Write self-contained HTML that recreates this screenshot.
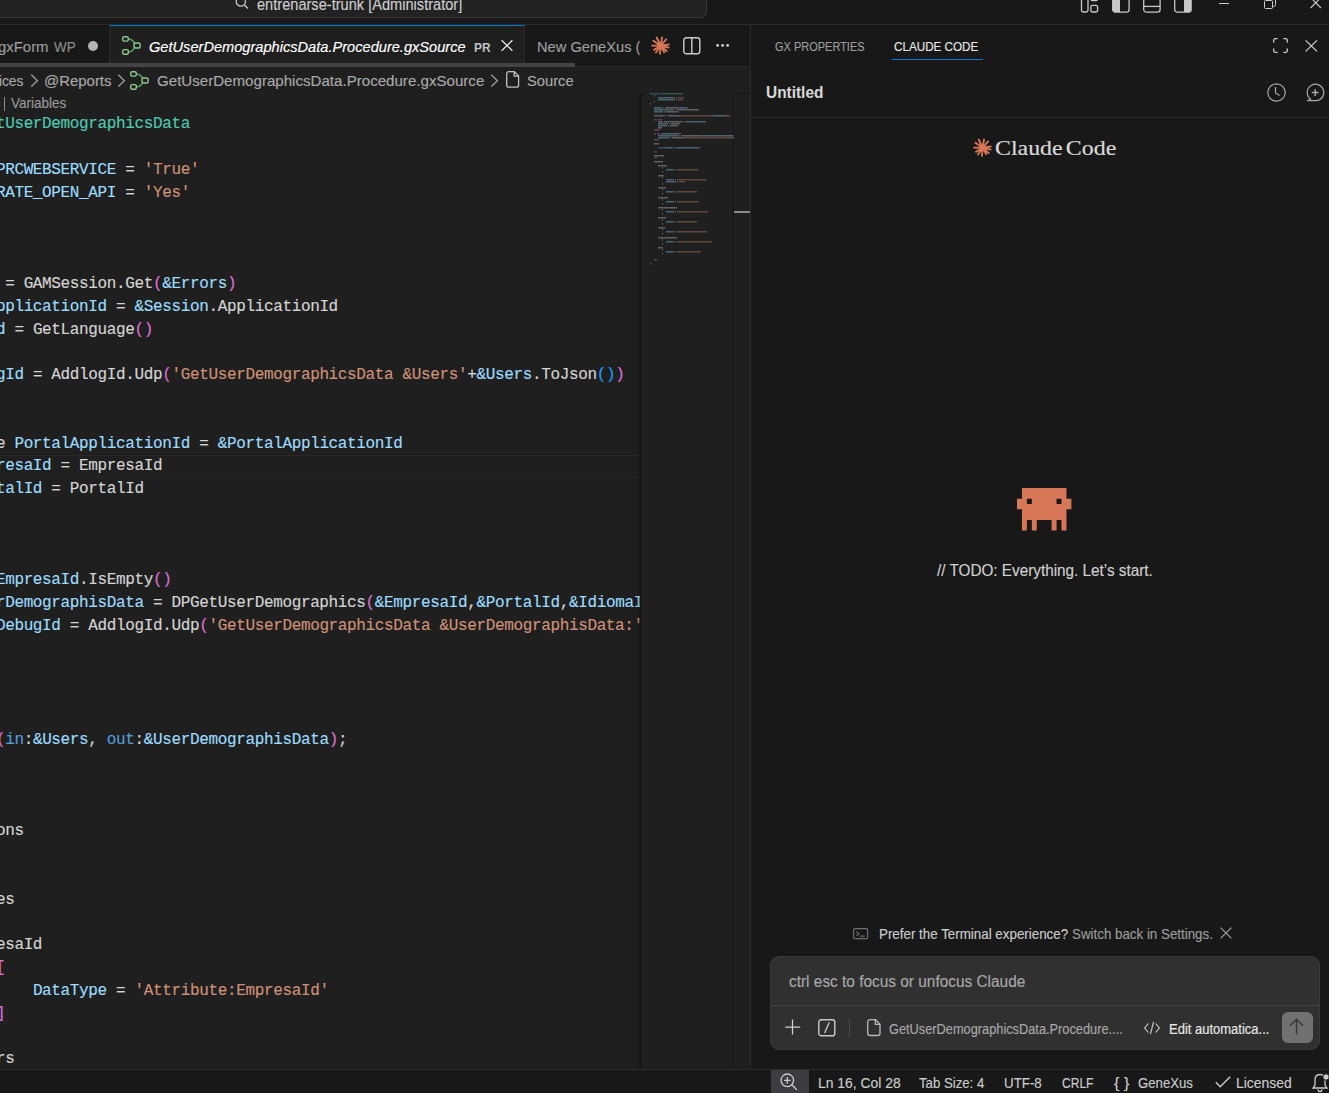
<!DOCTYPE html>
<html><head><meta charset="utf-8">
<style>
*{box-sizing:border-box;margin:0;padding:0}
html,body{width:1329px;height:1093px;overflow:hidden;background:#181818;font-family:"Liberation Sans",sans-serif;color:#ccc}
.a{position:absolute;white-space:pre;-webkit-text-stroke:0.15px currentColor}
svg{position:absolute;overflow:visible}
/* title bar */
#title{position:absolute;left:0;top:0;width:1329px;height:24px;background:#181818}
#search{position:absolute;left:-400px;top:-20px;width:1106.5px;height:38px;background:#222222;border:1px solid #383838;border-radius:6px}
#tline{position:absolute;left:0;top:24px;width:1329px;height:1px;background:#2b2b2b}
/* tabs */
#tabs{position:absolute;left:0;top:25px;width:750px;height:42px;background:#181818;overflow:hidden}
.tab{position:absolute;top:0;height:42px}
/* editor */
#bc{position:absolute;left:0;top:67px;width:750px;height:26px;background:#1f1f1f}
#ed{position:absolute;left:0;top:93px;width:750px;height:976px;background:#1f1f1f;overflow:hidden}
.code{position:absolute;left:-4.1px;font-family:"Liberation Mono",monospace;font-size:16px;letter-spacing:-0.36px;-webkit-text-stroke:0.15px currentColor;white-space:pre;color:#d4d4d4;height:22.8px;line-height:22.8px}
.v{color:#9cdcfe}.s{color:#ce9178}.t{color:#4ec9b0}.p{color:#da70d6}.b{color:#179fff}.k{color:#569cd6}
/* panel */
#panel{position:absolute;left:750px;top:25px;width:579px;height:1044px;background:#181818}
#status{position:absolute;left:0;top:1069px;width:1329px;height:24px;background:#181818;border-top:1px solid #2b2b2b}
</style></head><body>
<div id="title">
  <div id="search"></div>
  <svg style="left:235px;top:-4px" width="14" height="14" viewBox="0 0 14 14"><circle cx="5.8" cy="5.5" r="4.6" fill="none" stroke="#c4c4c4" stroke-width="1.3"/><line x1="9.1" y1="8.8" x2="13" y2="12.6" stroke="#c4c4c4" stroke-width="1.4"/></svg>
  <div class="a" id="ttext" style="left:257.00px;top:-4.00px;font-size:15.6px;line-height:18px;color:#cccccc;transform:scaleX(0.9361);transform-origin:0 0">entrenarse-trunk [Administrator]</div>
  <svg style="left:1080px;top:-8px" width="20" height="21" viewBox="0 0 20 21"><rect x="1.5" y="0.7" width="6.5" height="19.3" rx="1.8" fill="none" stroke="#c8c8c8" stroke-width="1.3"/><rect x="10.8" y="0.7" width="6.8" height="8" rx="1.8" fill="none" stroke="#c8c8c8" stroke-width="1.3"/><rect x="10.8" y="13.4" width="6.8" height="6.6" rx="1.8" fill="none" stroke="#c8c8c8" stroke-width="1.3"/></svg>
  <svg style="left:1112px;top:-8px" width="18" height="21" viewBox="0 0 18 21"><rect x="0.7" y="0.7" width="16.4" height="19.4" rx="2.6" fill="none" stroke="#c8c8c8" stroke-width="1.3"/><path d="M0.7 3.3 A2.6 2.6 0 0 1 3.3 0.7 H8 V20.1 H3.3 A2.6 2.6 0 0 1 0.7 17.5Z" fill="#c8c8c8"/></svg>
  <svg style="left:1143px;top:-8px" width="18" height="21" viewBox="0 0 18 21"><rect x="0.7" y="0.7" width="16.4" height="19.4" rx="2.6" fill="none" stroke="#c8c8c8" stroke-width="1.3"/><line x1="0.7" y1="14.4" x2="17.1" y2="14.4" stroke="#c8c8c8" stroke-width="1.3"/></svg>
  <svg style="left:1174px;top:-8px" width="18" height="21" viewBox="0 0 18 21"><rect x="0.7" y="0.7" width="16.4" height="19.4" rx="2.6" fill="none" stroke="#c8c8c8" stroke-width="1.3"/><path d="M17.1 3.3 A2.6 2.6 0 0 0 14.5 0.7 H10 V20.1 H14.5 A2.6 2.6 0 0 0 17.1 17.5Z" fill="#c8c8c8"/></svg>
  <div class="a" style="left:1219px;top:3px;width:10px;height:1px;background:#cccccc"></div>
  <svg style="left:1264px;top:-3px" width="12" height="12" viewBox="0 0 12 12"><rect x="0.5" y="3.5" width="8" height="8" rx="1" fill="none" stroke="#cccccc" stroke-width="1"/><path d="M2.5 3.5 V2.5 A2 2 0 0 1 4.5 0.5 H9.5 A2 2 0 0 1 11.5 2.5 V7.5 A2 2 0 0 1 9.5 9.5 H8.5" fill="none" stroke="#cccccc" stroke-width="1"/></svg>
  <svg style="left:1310px;top:-3px" width="12" height="12" viewBox="0 0 12 12"><path d="M0.5 0.5 L11 11 M11 0.5 L0.5 11" stroke="#cccccc" stroke-width="1.1"/></svg>
</div>
<div id="tline"></div>
<div id="tabs">
  <div class="tab" style="left:-40px;width:150px;background:#181818;border-right:1px solid #2b2b2b">
    <div class="a" id="t1" style="left:38.4px;top:12.60px;font-size:15.3px;line-height:18px;color:#9d9d9d;transform:scaleX(0.975);transform-origin:0 0">gxForm</div>
    <div class="a" id="t1b" style="left:93.93px;top:12.60px;font-size:15.3px;line-height:18px;color:#8b8b8b;transform:scaleX(0.8767);transform-origin:0 0">WP</div>
    <div class="a" style="left:127.5px;top:15.8px;width:10px;height:10px;border-radius:5px;background:#b4b4b4"></div>
  </div>
  <div class="tab" style="left:110px;width:415px;background:#1f1f1f;border-top:1px solid #0078d4;border-right:1px solid #2b2b2b">
    <svg style="left:12px;top:10.2px" width="20" height="20" viewBox="0 0 20 20"><path d="M6.6 3 C9.6 3.2 11.2 4.8 12.6 7.2 M6.6 16 C9.6 15.8 11.2 14.3 12.6 11.9" fill="none" stroke="#62a862" stroke-width="1.4"/><path d="M12.9 5.6 L13.3 7.6 L11.4 7.3Z M6.4 14.6 L7.6 16.8 L5.8 16.2Z" fill="#62a862"/><rect x="0.7" y="0.7" width="5.6" height="4.4" rx="1.5" fill="none" stroke="#8fcb8f" stroke-width="1.4"/><rect x="0.7" y="13.6" width="5.6" height="4.6" rx="1.5" fill="none" stroke="#8fcb8f" stroke-width="1.4"/><rect x="12.05" y="7" width="6.1" height="5" rx="1.5" fill="none" stroke="#8fcb8f" stroke-width="1.4"/></svg>
    <div class="a" id="t2" style="left:39.11px;top:11.60px;font-size:15.3px;line-height:18px;color:#ffffff;font-style:italic;transform:scaleX(0.9549);transform-origin:0 0">GetUserDemographicsData.Procedure.gxSource</div>
    <div class="a" id="t2b" style="left:364.04px;top:13.50px;font-size:13px;line-height:16px;color:#c2c2c2;font-weight:bold;-webkit-text-stroke:0;transform:scaleX(0.9160);transform-origin:0 0">PR</div>
    <svg style="left:391.3px;top:14.2px" width="12" height="11" viewBox="0 0 12 11"><path d="M0.6 0.3 L11.4 10.7 M11.4 0.3 L0.6 10.7" stroke="#e8e8e8" stroke-width="1.3"/></svg>
  </div>
  <div class="tab" style="left:525px;width:116px;overflow:hidden">
    <div class="a" id="t3" style="left:12.4px;top:12.60px;font-size:15.3px;line-height:18px;color:#9d9d9d;transform:scaleX(0.958);transform-origin:0 0">New GeneXus (</div>
  </div>
  <svg style="left:650.8px;top:10.6px" width="19.5" height="19.5" viewBox="-10 -10 20 20"><path d="M0 0L-4.23 -8.46M0 0L1.29 -8.46M0 0L5.52 -6.53M0 0L8.28 -1.29M0 0L8.19 1.93M0 0L6.07 5.43M0 0L3.59 6.72M0 0L-0.83 8.19M0 0L-4.88 6.99M0 0L-6.99 4.23M0 0L-8.83 -0.18M0 0L-7.54 -5.06" stroke="#d97757" stroke-width="1.9" stroke-linecap="round" fill="none"/><circle r="2.5" fill="#d97757"/></svg>
  <svg style="left:682.5px;top:11.6px" width="18" height="18" viewBox="0 0 18 18"><rect x="0.8" y="0.8" width="16" height="16" rx="2.6" fill="none" stroke="#cccccc" stroke-width="1.4"/><line x1="8.8" y1="0.8" x2="8.8" y2="16.8" stroke="#cccccc" stroke-width="1.4"/></svg>
  <svg style="left:715px;top:17px" width="16" height="6" viewBox="0 0 16 6"><circle cx="2.6" cy="3.4" r="1.45" fill="#cccccc"/><circle cx="7.6" cy="3.4" r="1.45" fill="#cccccc"/><circle cx="12.6" cy="3.4" r="1.45" fill="#cccccc"/></svg>
  <div class="a" style="left:0;top:41px;width:750px;height:1px;background:#242424"></div>
  <div class="a" style="left:0;top:38px;width:575px;height:4px;background:#444444"></div>
</div>
<div id="bc">
  <div class="a" id="b1" style="left:-8.5px;top:4.60px;font-size:15.3px;line-height:18px;color:#a9a9a9;transform:scaleX(0.9);transform-origin:0 0">vices</div>
  <svg style="left:30px;top:6px" width="10" height="16" viewBox="0 0 10 16"><path d="M1.3 1.8 L7.4 7.75 L1.3 13.5" fill="none" stroke="#9d9d9d" stroke-width="1.35"/></svg>
  <div class="a" id="b2" style="left:43.71px;top:4.60px;font-size:15.3px;line-height:18px;color:#a9a9a9;transform:scaleX(0.9769);transform-origin:0 0">@Reports</div>
  <svg style="left:117px;top:6px" width="10" height="16" viewBox="0 0 10 16"><path d="M1.3 1.8 L7.4 7.75 L1.3 13.5" fill="none" stroke="#9d9d9d" stroke-width="1.35"/></svg><svg style="left:130px;top:4.1px" width="20" height="20" viewBox="0 0 20 20"><path d="M6.6 3 C9.6 3.2 11.2 4.8 12.6 7.2 M6.6 16 C9.6 15.8 11.2 14.3 12.6 11.9" fill="none" stroke="#62a862" stroke-width="1.4"/><path d="M12.9 5.6 L13.3 7.6 L11.4 7.3Z M6.4 14.6 L7.6 16.8 L5.8 16.2Z" fill="#62a862"/><rect x="0.7" y="0.7" width="5.6" height="4.4" rx="1.5" fill="none" stroke="#8fcb8f" stroke-width="1.4"/><rect x="0.7" y="13.6" width="5.6" height="4.6" rx="1.5" fill="none" stroke="#8fcb8f" stroke-width="1.4"/><rect x="12.05" y="7" width="6.1" height="5" rx="1.5" fill="none" stroke="#8fcb8f" stroke-width="1.4"/></svg>
  <div class="a" id="b3" style="left:156.98px;top:4.60px;font-size:15.3px;line-height:18px;color:#a9a9a9;transform:scaleX(0.9870);transform-origin:0 0">GetUserDemographicsData.Procedure.gxSource</div>
  <svg style="left:489.5px;top:6px" width="10" height="16" viewBox="0 0 10 16"><path d="M1.3 1.8 L7.4 7.75 L1.3 13.5" fill="none" stroke="#9d9d9d" stroke-width="1.35"/></svg>
  <svg style="left:506.3px;top:4px" width="14" height="17" viewBox="0 0 14 17"><path d="M2.6 0.7 H8.4 L12.6 4.9 V14 A2.2 2.2 0 0 1 10.4 16.2 H2.9 A2.2 2.2 0 0 1 0.7 14 V2.9 A2.2 2.2 0 0 1 2.6 0.7Z M8.2 0.7 V5.1 H12.6" fill="none" stroke="#c0c0c0" stroke-width="1.3"/></svg>
  <div class="a" id="b4" style="left:526.65px;top:4.60px;font-size:15.3px;line-height:18px;color:#a9a9a9;transform:scaleX(0.9610);transform-origin:0 0">Source</div>
</div>
<div id="ed">
<div class="a" style="left:0;top:361.5px;width:640px;height:23px;border-top:1px solid #282828;border-bottom:1px solid #282828"></div>
<div class="a" style="left:3.6px;top:4px;width:1.3px;height:14px;background:#8c8c8c"></div>
<div class="a" id="cl" style="left:11.00px;top:2px;font-size:14px;line-height:16px;color:#999999;transform:scaleX(0.9654);transform-origin:0 0">Variables</div>
<div class="a" style="left:0;top:0;width:640px;height:976px;overflow:hidden">
<div class="code" style="top:20.3px"><span class="t">tUserDemographicsData</span></div>
<div class="code" style="top:65.9px"><span class="v">PRCWEBSERVICE</span> = <span class="s">'True'</span></div>
<div class="code" style="top:88.7px"><span class="v">RATE_OPEN_API</span> = <span class="s">'Yes'</span></div>
<div class="code" style="top:179.9px"> = GAMSession.Get<span class="p">(</span><span class="v">&amp;Errors</span><span class="p">)</span></div>
<div class="code" style="top:202.7px"><span class="v">pplicationId</span> = <span class="v">&amp;Session</span>.ApplicationId</div>
<div class="code" style="top:225.5px"><span class="v">d</span> = GetLanguage<span class="p">()</span></div>
<div class="code" style="top:271.1px"><span class="v">gId</span> = AddlogId.Udp<span class="p">(</span><span class="s">'GetUserDemographicsData &amp;Users'</span>+<span class="v">&amp;Users</span>.ToJson<span class="b">()</span><span class="p">)</span></div>
<div class="code" style="top:339.5px">e <span class="v">PortalApplicationId</span> = <span class="v">&amp;PortalApplicationId</span></div>
<div class="code" style="top:362.3px"><span class="v">resaId</span> = EmpresaId</div>
<div class="code" style="top:385.1px"><span class="v">talId</span> = PortalId</div>
<div class="code" style="top:476.3px"><span class="v">EmpresaId</span>.IsEmpty<span class="p">()</span></div>
<div class="code" style="top:499.1px"><span class="v">rDemographisData</span> = DPGetUserDemographics<span class="p">(</span><span class="v">&amp;EmpresaId</span>,<span class="v">&amp;PortalId</span>,<span class="v">&amp;IdiomaId</span><span class="p">)</span></div>
<div class="code" style="top:521.9px"><span class="v">DebugId</span> = AddlogId.Udp<span class="p">(</span><span class="s">'GetUserDemographicsData &amp;UserDemographisData:'</span>+<span class="v">&amp;UserDemographisData</span>.ToJson<span class="b">()</span><span class="p">)</span></div>
<div class="code" style="top:635.9px"><span class="p">(</span><span class="k">in</span>:<span class="v">&amp;Users</span>, <span class="k">out</span>:<span class="v">&amp;UserDemographisData</span><span class="p">)</span>;</div>
<div class="code" style="top:727.1px">ons</div>
<div class="code" style="top:795.5px">es</div>
<div class="code" style="top:841.1px">esaId</div>
<div class="code" style="top:863.9px"><span class="p">[</span></div>
<div class="code" style="top:886.7px">    <span class="v">DataType</span> = <span class="s">'Attribute:EmpresaId'</span></div>
<div class="code" style="top:909.5px"><span class="p">]</span></div>
<div class="code" style="top:955.1px">rs</div>
</div>
<div class="a" style="left:636px;top:0;width:6px;height:976px;background:linear-gradient(to right,rgba(0,0,0,0),rgba(0,0,0,0.35))"></div>
<div class="a" style="left:733px;top:0;width:17px;height:976px;background:#1f1f1f;border-left:1px solid #121416;border-top:1px solid #121416"></div>
<div class="a" style="left:734px;top:118px;width:16px;height:2px;background:#8b8b8b"></div>
<div id="mm" class="a" style="left:642px;top:0;width:91px;height:976px"><svg style="left:7.8px;top:0.3px" width="84" height="180" viewBox="0 0 84 180"><path fill="#569cd6" fill-opacity="0.36" d="M0 0.0h9v1.4h-9zM8 54.0h4v1.4h-4zM13 54.0h2v1.4h-2zM24 54.0h3v1.4h-3z"/><path fill="#4ec9b0" fill-opacity="0.36" d="M10 0.0h23v1.4h-23z"/><path fill="#d4d4d4" fill-opacity="0.36" d="M4 2.0h1v1.4h-1zM26 4.0h1v1.4h-1zM26 6.0h1v1.4h-1zM4 8.0h1v1.4h-1zM0 10.0h1v1.4h-1zM13 14.0h1v1.4h-1zM15 14.0h10v1.4h-10zM25 14.0h1v1.4h-1zM26 14.0h3v1.4h-3zM25 16.0h1v1.4h-1zM35 16.0h1v1.4h-1zM36 16.0h13v1.4h-13zM14 18.0h1v1.4h-1zM16 18.0h11v1.4h-11zM16 22.0h1v1.4h-1zM18 22.0h8v1.4h-8zM26 22.0h1v1.4h-1zM27 22.0h3v1.4h-3zM63 22.0h1v1.4h-1zM70 22.0h1v1.4h-1zM71 22.0h6v1.4h-6zM8 28.0h5v1.4h-5zM14 28.0h19v1.4h-19zM34 28.0h1v1.4h-1zM19 30.0h1v1.4h-1zM21 30.0h9v1.4h-9zM18 32.0h1v1.4h-1zM20 32.0h8v1.4h-8zM8 34.0h4v1.4h-4zM21 40.0h1v1.4h-1zM22 40.0h7v1.4h-7zM29 42.0h1v1.4h-1zM31 42.0h21v1.4h-21zM63 42.0h1v1.4h-1zM73 42.0h1v1.4h-1zM20 44.0h1v1.4h-1zM22 44.0h8v1.4h-8zM30 44.0h1v1.4h-1zM31 44.0h3v1.4h-3zM82 44.0h1v1.4h-1zM4 50.0h5v1.4h-5zM15 54.0h1v1.4h-1zM22 54.0h1v1.4h-1zM27 54.0h1v1.4h-1zM49 54.0h1v1.4h-1zM4 62.0h10v1.4h-10zM4 68.0h9v1.4h-9zM8 72.0h9v1.4h-9zM12 74.0h1v1.4h-1zM25 76.0h1v1.4h-1zM12 78.0h1v1.4h-1zM8 82.0h6v1.4h-6zM12 84.0h1v1.4h-1zM25 86.0h1v1.4h-1zM55 86.0h1v1.4h-1zM27 88.0h1v1.4h-1zM12 90.0h1v1.4h-1zM8 94.0h8v1.4h-8zM12 96.0h1v1.4h-1zM25 98.0h1v1.4h-1zM12 100.0h1v1.4h-1zM8 104.0h10v1.4h-10zM12 106.0h1v1.4h-1zM25 108.0h1v1.4h-1zM12 110.0h1v1.4h-1zM8 114.0h19v1.4h-19zM12 116.0h1v1.4h-1zM25 118.0h1v1.4h-1zM12 120.0h1v1.4h-1zM8 124.0h8v1.4h-8zM12 126.0h1v1.4h-1zM25 128.0h1v1.4h-1zM12 130.0h1v1.4h-1zM8 134.0h7v1.4h-7zM12 136.0h1v1.4h-1zM25 138.0h1v1.4h-1zM12 140.0h1v1.4h-1zM8 144.0h19v1.4h-19zM12 146.0h1v1.4h-1zM25 148.0h1v1.4h-1zM12 150.0h1v1.4h-1zM8 154.0h5v1.4h-5zM12 156.0h1v1.4h-1zM25 158.0h1v1.4h-1zM12 160.0h1v1.4h-1zM0 170.0h1v1.4h-1z"/><path fill="#9cdcfe" fill-opacity="0.36" d="M8 4.0h17v1.4h-17zM8 6.0h17v1.4h-17zM4 14.0h8v1.4h-8zM30 14.0h7v1.4h-7zM4 16.0h20v1.4h-20zM27 16.0h8v1.4h-8zM4 18.0h9v1.4h-9zM4 22.0h11v1.4h-11zM64 22.0h6v1.4h-6zM36 28.0h20v1.4h-20zM8 30.0h10v1.4h-10zM8 32.0h9v1.4h-9zM11 40.0h10v1.4h-10zM8 42.0h20v1.4h-20zM53 42.0h10v1.4h-10zM64 42.0h9v1.4h-9zM74 42.0h9v1.4h-9zM8 44.0h11v1.4h-11zM83 44.0h1v1.4h-1zM16 54.0h6v1.4h-6zM28 54.0h20v1.4h-20zM16 76.0h8v1.4h-8zM16 86.0h8v1.4h-8zM16 88.0h10v1.4h-10zM16 98.0h8v1.4h-8zM16 108.0h8v1.4h-8zM16 118.0h8v1.4h-8zM16 128.0h8v1.4h-8zM16 138.0h8v1.4h-8zM16 148.0h8v1.4h-8zM16 158.0h8v1.4h-8z"/><path fill="#ce9178" fill-opacity="0.36" d="M28 4.0h6v1.4h-6zM28 6.0h5v1.4h-5zM31 22.0h32v1.4h-32zM35 44.0h47v1.4h-47zM27 76.0h21v1.4h-21zM27 86.0h28v1.4h-28zM29 88.0h6v1.4h-6zM27 98.0h20v1.4h-20zM27 108.0h22v1.4h-22zM27 118.0h31v1.4h-31zM27 128.0h20v1.4h-20zM27 138.0h30v1.4h-30zM27 148.0h35v1.4h-35zM27 158.0h24v1.4h-24z"/><path fill="#da70d6" fill-opacity="0.36" d="M29 14.0h1v1.4h-1zM37 14.0h1v1.4h-1zM27 18.0h1v1.4h-1zM28 18.0h1v1.4h-1zM30 22.0h1v1.4h-1zM77 22.0h1v1.4h-1zM78 22.0h1v1.4h-1zM79 22.0h1v1.4h-1zM29 40.0h1v1.4h-1zM30 40.0h1v1.4h-1zM52 42.0h1v1.4h-1zM83 42.0h1v1.4h-1zM34 44.0h1v1.4h-1zM12 54.0h1v1.4h-1zM48 54.0h1v1.4h-1z"/><path fill="#c586c0" fill-opacity="0.36" d="M4 26.0h3v1.4h-3zM8 26.0h4v1.4h-4zM4 36.0h6v1.4h-6zM4 40.0h2v1.4h-2zM7 40.0h3v1.4h-3zM4 46.0h5v1.4h-5zM4 58.0h3v1.4h-3zM4 64.0h3v1.4h-3zM4 166.0h3v1.4h-3z"/></svg></div>
</div>
<div id="panel">
  <div class="a" style="left:0;top:0;width:1px;height:1044px;background:#2b2b2b"></div>
  <div class="a" id="p1" style="left:25.45px;top:13.90px;font-size:13.2px;line-height:16px;color:#9d9d9d;transform:scaleX(0.8333);transform-origin:0 0">GX PROPERTIES</div>
  <div class="a" id="p2" style="left:144.25px;top:13.90px;font-size:13.2px;line-height:16px;color:#e7e7e7;transform:scaleX(0.8853);transform-origin:0 0">CLAUDE CODE</div>
  <div class="a" style="left:142px;top:34px;width:91px;height:1px;background:#0078d4"></div>
  <svg style="left:522.9px;top:13.3px" width="15" height="15" viewBox="0 0 15 15"><path d="M0.7 4.6 V2.2 A1.5 1.5 0 0 1 2.2 0.7 H4.6 M10.4 0.7 H12.8 A1.5 1.5 0 0 1 14.3 2.2 V4.6 M14.3 10.4 V12.8 A1.5 1.5 0 0 1 12.8 14.3 H10.4 M4.6 14.3 H2.2 A1.5 1.5 0 0 1 0.7 12.8 V10.4" fill="none" stroke="#cccccc" stroke-width="1.3"/></svg>
  <svg style="left:555px;top:15px" width="13" height="12" viewBox="0 0 13 12"><path d="M0.6 0.4 L12 11.4 M12 0.4 L0.6 11.4" stroke="#cccccc" stroke-width="1.3"/></svg>
  <div class="a" id="p3" style="left:15.95px;top:57px;font-size:16.5px;line-height:20px;color:#d8d8d8;font-weight:bold;-webkit-text-stroke:0;transform:scaleX(0.9348);transform-origin:0 0">Untitled</div>
  <svg style="left:517px;top:57.5px" width="19" height="19" viewBox="0 0 19 19"><circle cx="9.5" cy="9.5" r="8.7" fill="none" stroke="#a8a8a8" stroke-width="1.2"/><path d="M8.5 4 V10 L12.6 12.5" fill="none" stroke="#a8a8a8" stroke-width="1.2"/></svg>
  <svg style="left:555.8px;top:57.5px" width="19" height="19" viewBox="0 0 19 19"><path d="M4.7 16.3 A8.3 8.3 0 1 1 10.9 17.7 L1.3 17.7 Z" fill="none" stroke="#a8a8a8" stroke-width="1.2" stroke-linejoin="round"/><path d="M9.2 6.2 V13 M5.8 9.6 H12.6" stroke="#a8a8a8" stroke-width="1.5"/></svg>
  <div class="a" style="left:0;top:92px;width:579px;height:1px;background:#2b2b2b"></div>
  <svg style="left:222.8px;top:112.8px" width="19.5" height="19.5" viewBox="-10 -10 20 20"><path d="M0 0L-4.23 -8.46M0 0L1.29 -8.46M0 0L5.52 -6.53M0 0L8.28 -1.29M0 0L8.19 1.93M0 0L6.07 5.43M0 0L3.59 6.72M0 0L-0.83 8.19M0 0L-4.88 6.99M0 0L-6.99 4.23M0 0L-8.83 -0.18M0 0L-7.54 -5.06" stroke="#d97757" stroke-width="1.9" stroke-linecap="round" fill="none"/><circle r="2.5" fill="#d97757"/></svg>
  <div class="a" id="p4" style="left:245.43px;top:110px;font-family:'Liberation Serif',serif;font-size:22px;line-height:26px;color:#d8d8d8;-webkit-text-stroke:0.2px #d8d8d8;word-spacing:-2.5px;transform:scaleX(1.085);transform-origin:0 0">Claude Code</div>
  <svg style="left:267.3px;top:462.7px" width="54.4" height="42.5" viewBox="0 0 11 8" preserveAspectRatio="none"><path fill="#d77757" fill-rule="evenodd" d="M1 0 H10 V2 H11 V4 H10 V8 H9 V6 H8 V8 H7 V6 H4 V8 H3 V6 H2 V8 H1 V4 H0 V2 H1 Z M2 2 V3 H3 V2 Z M8 2 V3 H9 V2 Z"/></svg>
  <div class="a" id="p5" style="left:186.95px;top:536px;font-size:16px;line-height:20px;color:#d0d0d0;transform:scaleX(0.9555);transform-origin:0 0">// TODO: Everything. Let’s start.</div>
  <svg style="left:102.9px;top:902.8px" width="16" height="12" viewBox="0 0 16 12"><rect x="0.6" y="0.6" width="14" height="10" rx="1.1" fill="none" stroke="#707070" stroke-width="1.15"/><path d="M3.4 3.5 L5.9 5.7 L3.4 7.9 M7.2 8.1 H11.8" fill="none" stroke="#707070" stroke-width="1.15"/></svg>
  <div class="a" id="p6" style="left:129.43px;top:901.00px;font-size:14.4px;line-height:17px;color:#cccccc;transform:scaleX(0.9285);transform-origin:0 0">Prefer the Terminal experience?</div>
  <div class="a" id="p7" style="left:322.45px;top:901.00px;font-size:14.4px;line-height:17px;color:#9d9d9d;transform:scaleX(0.9271);transform-origin:0 0">Switch back in Settings.</div>
  <svg style="left:470px;top:902.4px" width="12" height="12" viewBox="0 0 12 12"><path d="M0.6 0.6 L11.4 11.4 M11.4 0.6 L0.6 11.4" stroke="#a0a0a0" stroke-width="1.2"/></svg>
  <div class="a" style="left:20px;top:930.8px;width:550px;height:94.2px;background:#303030;border:1px solid #3a3a3a;border-radius:9px"></div>
  <div class="a" style="left:21px;top:979.5px;width:548px;height:1px;background:#454545"></div>
  <div class="a" id="p8" style="left:38.77px;top:948.00px;font-size:15.6px;line-height:18px;color:#a8a8a8;transform:scaleX(0.9878);transform-origin:0 0">ctrl esc to focus or unfocus Claude</div>
  <svg style="left:34.9px;top:994.2px" width="16" height="16" viewBox="0 0 16 16"><path d="M7.5 0.6 V15.6 M0.2 8.2 H15.2" stroke="#d0d0d0" stroke-width="1.25"/></svg>
  <svg style="left:67.8px;top:993.6px" width="18" height="18" viewBox="0 0 18 18"><rect x="0.8" y="0.8" width="16" height="16" rx="2.4" fill="none" stroke="#c8c8c8" stroke-width="1.4"/><path d="M11.2 3.6 L6.6 14" stroke="#c8c8c8" stroke-width="1.3"/></svg>
  <div class="a" style="left:99px;top:993.5px;width:1px;height:18px;background:#4a4a4a"></div>
  <svg style="left:116.9px;top:994px" width="14" height="17" viewBox="0 0 14 17"><path d="M2.5 0.7 H8.5 L13 5.2 V14.2 A2.3 2.3 0 0 1 10.7 16.5 H2.8 A2.3 2.3 0 0 1 0.7 14.2 V2.8 A2.3 2.3 0 0 1 2.5 0.7Z M8.3 0.7 V5.3 H13" fill="none" stroke="#b8b8b8" stroke-width="1.3"/></svg>
  <div class="a" id="p9" style="left:139.02px;top:995.50px;font-size:13.8px;line-height:17px;color:#a8a8a8;transform:scaleX(0.9265);transform-origin:0 0">GetUserDemographicsData.Procedure....</div>
  <svg style="left:394.3px;top:995.5px" width="16" height="14" viewBox="0 0 16 14"><path d="M4.3 2.5 L0.7 7 L4.3 11.5 M11.7 2.5 L15.3 7 L11.7 11.5 M9.6 0.8 L6.4 13.2" fill="none" stroke="#c8c8c8" stroke-width="1.2"/></svg>
  <div class="a" id="p10" style="left:419.08px;top:995.50px;font-size:13.8px;line-height:17px;color:#e8e8e8;transform:scaleX(0.9415);transform-origin:0 0">Edit automatica...</div>
  <div class="a" style="left:531.8px;top:987.2px;width:31px;height:31px;background:#717171;border-radius:6px"></div>
  <svg style="left:539.3px;top:992.7px" width="15" height="17" viewBox="0 0 15 17"><path d="M7.5 16.2 V1.2 M1.1 7.6 L7.5 1.2 L13.9 7.6" fill="none" stroke="#363636" stroke-width="1.4"/></svg>
</div>
<div id="status">
  <div class="a" style="left:771px;top:0;width:38px;height:24px;background:#3b3d40"></div>
  <svg style="left:780px;top:3px" width="18" height="18" viewBox="0 0 18 18"><circle cx="7.3" cy="7.3" r="6.3" fill="none" stroke="#cccccc" stroke-width="1.3"/><path d="M7.3 4 V10.6 M4 7.3 H10.6 M11.8 11.8 L16.8 16.8" stroke="#cccccc" stroke-width="1.3"/></svg>
  <div class="a" id="s1" style="left:817.63px;top:5.00px;font-size:14.4px;line-height:17px;color:#cccccc;transform:scaleX(0.9651);transform-origin:0 0">Ln 16, Col 28</div>
  <div class="a" id="s2" style="left:919.45px;top:5.00px;font-size:14.4px;line-height:17px;color:#cccccc;transform:scaleX(0.9169);transform-origin:0 0">Tab Size: 4</div>
  <div class="a" id="s3" style="left:1004.05px;top:5.00px;font-size:14.4px;line-height:17px;color:#cccccc;transform:scaleX(0.9264);transform-origin:0 0">UTF-8</div>
  <div class="a" id="s4" style="left:1061.58px;top:5.00px;font-size:14.4px;line-height:17px;color:#cccccc;transform:scaleX(0.8378);transform-origin:0 0">CRLF</div>
  <div class="a" id="s5" style="left:1113.64px;top:4.00px;font-size:15px;line-height:17px;color:#cccccc;transform:scaleX(1.0762);transform-origin:0 0">{ }</div>
  <div class="a" id="s6" style="left:1138.44px;top:5.00px;font-size:14.4px;line-height:17px;color:#cccccc;transform:scaleX(0.9159);transform-origin:0 0">GeneXus</div>
  <svg style="left:1214.5px;top:6px" width="16" height="12" viewBox="0 0 16 12"><path d="M0.8 6.3 L5.2 10.7 L15.2 0.8" fill="none" stroke="#cccccc" stroke-width="1.4"/></svg>
  <div class="a" id="s7" style="left:1235.51px;top:5.00px;font-size:14.4px;line-height:17px;color:#cccccc;transform:scaleX(0.9653);transform-origin:0 0">Licensed</div>
  <svg style="left:1312px;top:3px" width="18" height="20" viewBox="0 0 18 20"><path d="M8 1.5 C4.5 1.5 3 4 3 7 V12 L1 15 H15 L13 12 V7 C13 4 11.5 1.5 8 1.5Z M6 16.5 A2 2 0 0 0 10 16.5" fill="none" stroke="#cccccc" stroke-width="1.3"/><circle cx="14" cy="4" r="3.2" fill="#cccccc" stroke="#181818" stroke-width="1"/></svg>
</div>
</body></html>
